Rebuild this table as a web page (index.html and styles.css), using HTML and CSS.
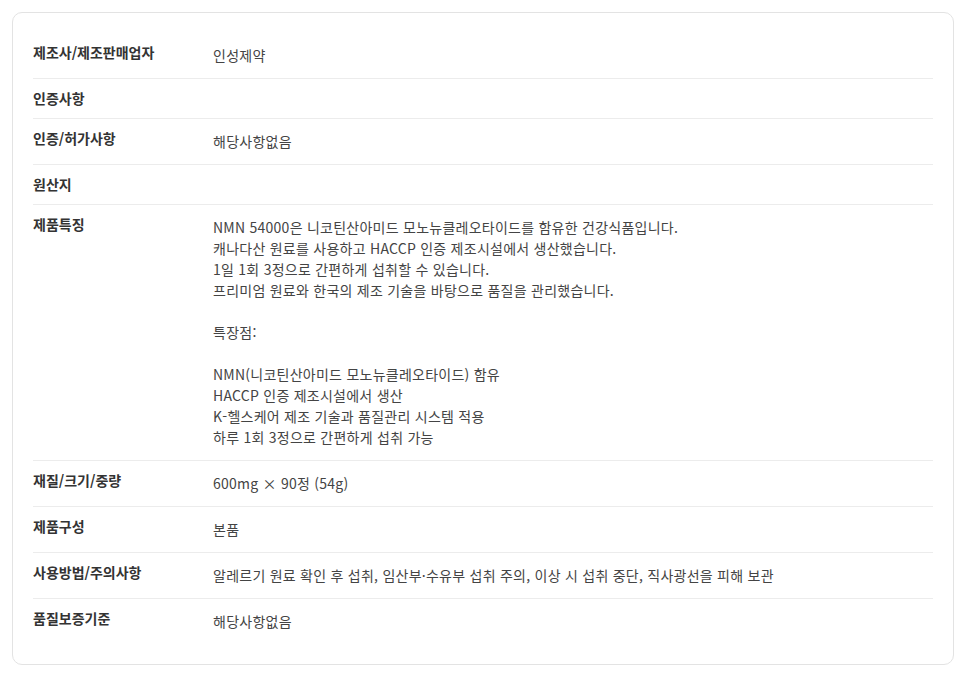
FILE: index.html
```html
<!DOCTYPE html>
<html lang="ko">
<head>
<meta charset="utf-8">
<link rel="stylesheet" href="styles.css">
</head>
<body>
<div class="card">
  <div class="row"><div class="label">제조사/제조판매업자</div><div class="value">인성제약</div></div>
  <div class="row"><div class="label">인증사항</div><div class="value"></div></div>
  <div class="row"><div class="label">인증/허가사항</div><div class="value">해당사항없음</div></div>
  <div class="row"><div class="label">원산지</div><div class="value"></div></div>
  <div class="row"><div class="label">제품특징</div><div class="value">NMN 54000은 니코틴산아미드 모노뉴클레오타이드를 함유한 건강식품입니다.
캐나다산 원료를 사용하고 HACCP 인증 제조시설에서 생산했습니다.
1일 1회 3정으로 간편하게 섭취할 수 있습니다.
프리미엄 원료와 한국의 제조 기술을 바탕으로 품질을 관리했습니다.

특장점:

NMN(니코틴산아미드 모노뉴클레오타이드) 함유
HACCP 인증 제조시설에서 생산
K-헬스케어 제조 기술과 품질관리 시스템 적용
하루 1회 3정으로 간편하게 섭취 가능</div></div>
  <div class="row"><div class="label">재질/크기/중량</div><div class="value">600mg × 90정 (54g)</div></div>
  <div class="row"><div class="label">제품구성</div><div class="value">본품</div></div>
  <div class="row"><div class="label">사용방법/주의사항</div><div class="value">알레르기 원료 확인 후 섭취, 임산부·수유부 섭취 주의, 이상 시 섭취 중단, 직사광선을 피해 보관</div></div>
  <div class="row"><div class="label">품질보증기준</div><div class="value">해당사항없음</div></div>
</div>
</body>
</html>
```

FILE: styles.css
```css
html, body {
  margin: 0;
  padding: 0;
  background: #fff;
}
body {
  padding: 12px 14px 12px 12px;
  font-family: "Noto Sans CJK KR", "Noto Sans", sans-serif;
}
.card {
  border: 1px solid #e3e3e3;
  border-radius: 10px;
  padding: 20px 20px;
  background: #fff;
}
.row {
  display: grid;
  grid-template-columns: 180px 1fr;
  padding: 12px 0;
  border-bottom: 1px solid #ececec;
}
.row:last-child {
  border-bottom: none;
}
.label {
  font-size: 14px;
  font-weight: 700;
  line-height: 15px;
  color: #333;
}
.value {
  font-size: 14px;
  letter-spacing: 0.25px;
  line-height: 21px;
  color: #444;
  white-space: pre-line;
}
```
